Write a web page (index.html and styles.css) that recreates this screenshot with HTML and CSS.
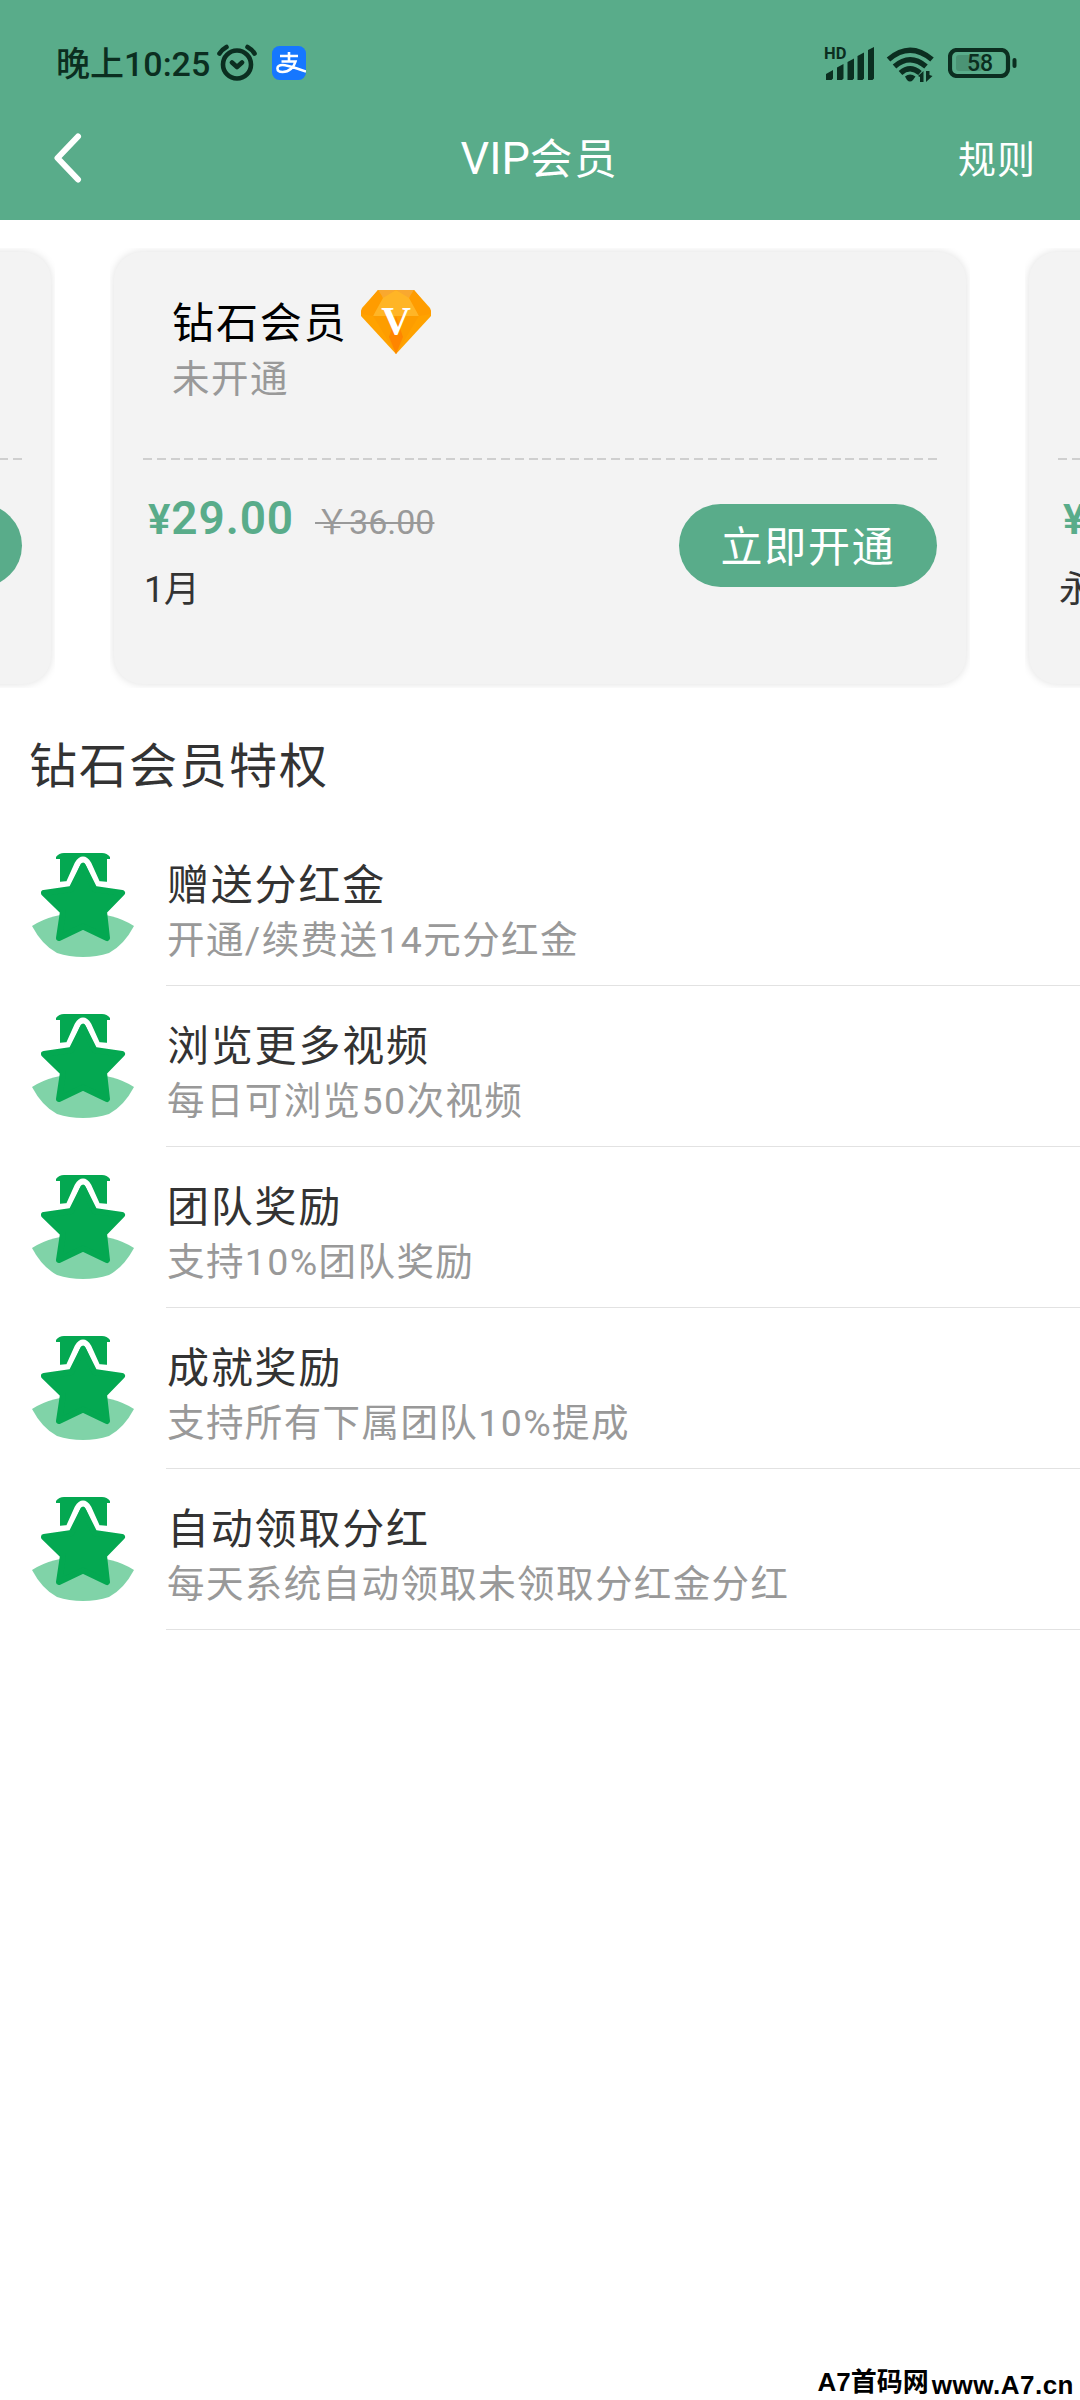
FILE: index.html
```html
<!DOCTYPE html>
<html lang="zh-CN">
<head>
<meta charset="utf-8">
<title>VIP会员</title>
<link rel="stylesheet" href="styles.css">
</head>
<body>
<svg class="defs" width="0" height="0">
  <symbol id="medal" viewBox="0 0 102 104">
    <path fill="#80d3a8" d="M0 73Q20 60 51 60Q82 60 102 73Q92 92 77 100Q65 104 51 104Q37 104 25 100Q10 92 0 73Z"/>
    <path fill="#04a851" d="M32 0H70Q75 0 78 4V6H75V29H28V6H24V4Q27 0 32 0Z"/>
    <path fill="none" stroke="#fff" stroke-width="6" stroke-linejoin="round" d="M26 32L36.500 31L45.500 11Q51 2 56.500 11L65.500 31L77 32"/>
    <path fill="#04a851" stroke="#04a851" stroke-width="6" stroke-linejoin="round" d="M51 13L39.500 36L12 40L31 58.500L27 85L51 73.500L75 85L72 58.500L90 40L62.500 36Z"/>
  </symbol>
</svg>
<div class="page">
  <header class="header">
    <div class="status">
      <span class="time">晚上10:25</span>
      <svg class="alarm" viewBox="0 0 42 38" fill="none" stroke="#0b2e20" stroke-width="4.600" stroke-linecap="round" stroke-linejoin="round">
        <circle cx="20" cy="20.500" r="14"/><path d="M15 18.500L20 23L25 18.500M2.500 9.500Q5 5.500 9.500 3M30.500 3Q35 5.500 37.500 9.500"/>
      </svg>
      <svg class="alipay" viewBox="0 0 34 34">
        <rect width="34" height="34" rx="7.500" fill="#1677ff"/>
        <path fill="none" stroke="#fff" stroke-width="2.600" d="M8 10H26M17 6V15.500M9.500 15.500H23.500C22 21 17.500 26 10.500 26C4 26 3.500 19 10.500 19C17 19 25 23 34 25.500"/>
      </svg>
      <span class="spacer"></span>
      <svg class="signal" viewBox="0 0 50 36" fill="#0b2e20">
        <text class="hd" x="0" y="14">HD</text>
        <path d="M2 35V29L9 25V33.500L7.500 35ZM13 35V22.500L19.500 19V33.500L18 35ZM23.500 35V17L30 13.500V33.500L28.500 35ZM33.500 35V11L40 7.500V33.500L38.500 35ZM44 35V5L50 2V33.500L48.500 35Z"/>
      </svg>
      <svg class="wifi" viewBox="0 0 48 36" fill="none" stroke="#0b2e20" stroke-width="5.400">
        <path d="M1.500 13.500Q23 -5 45 13.500M7.500 20.500Q23 7 39 20.500M13.500 27Q23 18.500 33 27"/>
        <path fill="#0b2e20" stroke="none" d="M18 30.500Q23 26.500 28.500 30.500L26 34Q23 37 20 34ZM31 30L36.500 25V36H33V31ZM39 25H42.500V29L45.500 30L39 36Z"/>
      </svg>
      <svg class="battery" viewBox="0 0 69 30">
        <rect x="8" y="7" width="26" height="16" rx="3" fill="#4b9475"/>
        <rect x="2" y="2" width="58" height="26" rx="7" fill="none" stroke="#0b2e20" stroke-width="4.200"/>
        <rect x="64.500" y="10" width="4" height="10" rx="2" fill="#0b2e20"/>
        <text class="pct" x="19" y="23" textLength="26">58</text>
      </svg>
    </div>
    <nav class="nav">
      <svg class="back" viewBox="0 0 28 50" fill="none" stroke="#fff" stroke-width="6" stroke-linecap="round" stroke-linejoin="round"><path d="M24 3.500L3.500 25L24 46.500"/></svg>
      <h1 class="title"><span class="vip">VIP</span>会员</h1>
      <span class="rules">规则</span>
    </nav>
  </header>

  <section class="carousel">
    <div class="slide"><div class="card">
      <div class="level"></div>
      <div class="offer"><div></div><button class="buy">立即开通</button></div>
    </div></div>
    <div class="slide"><div class="card">
      <div class="level">
        <div class="name">钻石会员
          <svg class="gem" viewBox="0 0 70 64" preserveAspectRatio="none">
            <path fill="#ffa200" d="M17 0H53L69 18Q70 20 70 22V26L35 64L0 26V22Q0 20 1 18Z"/>
            <path fill="#ffb526" d="M20 7L35 0L50 7L58 26H12Z"/>
            <path fill="#f9a82f" d="M17 0H53L48 8L35 0L22 8Z"/>
            <path fill="#ff9c00" d="M17 0L22 8L12 26L0 24V21ZM53 0L48 8L58 26L70 24V21Z"/>
            <path fill="#fa9600" d="M12 26H58L35 64Z" opacity=".45"/>
            <path fill="#ff8500" d="M35 26L28 47L35 64L42 47Z"/>
            <text class="gem-v" x="35" y="43.500" text-anchor="middle">V</text>
          </svg>
        </div>
        <div class="state">未开通</div>
      </div>
      <div class="offer">
        <div class="prices">
          <div class="price-row"><b class="price"><span class="yen">¥</span>29.00</b><s class="old">￥36.00</s></div>
          <div class="term">1月</div>
        </div>
        <button class="buy">立即开通</button>
      </div>
    </div></div>
    <div class="slide"><div class="card">
      <div class="level"></div>
      <div class="offer">
        <div class="prices">
          <div class="price-row"><b class="price"><span class="yen">¥</span></b></div>
          <div class="term">永久</div>
        </div>
      </div>
    </div></div>
  </section>

  <h2 class="heading">钻石会员特权</h2>
  <ul class="perks">
    <li class="perk"><svg class="medal"><use href="#medal"/></svg><div class="body"><div class="perk-name">赠送分红金</div><div class="perk-desc">开通/续费送14元分红金</div></div></li>
    <li class="perk"><svg class="medal"><use href="#medal"/></svg><div class="body"><div class="perk-name">浏览更多视频</div><div class="perk-desc">每日可浏览50次视频</div></div></li>
    <li class="perk"><svg class="medal"><use href="#medal"/></svg><div class="body"><div class="perk-name">团队奖励</div><div class="perk-desc">支持10%团队奖励</div></div></li>
    <li class="perk"><svg class="medal"><use href="#medal"/></svg><div class="body"><div class="perk-name">成就奖励</div><div class="perk-desc">支持所有下属团队10%提成</div></div></li>
    <li class="perk"><svg class="medal"><use href="#medal"/></svg><div class="body"><div class="perk-name">自动领取分红</div><div class="perk-desc">每天系统自动领取未领取分红金分红</div></div></li>
  </ul>
  <div class="watermark"><span>A7</span><span class="wm-cn">首码网</span><span class="wm-url">www.A7.cn</span></div>
</div>
</body>
</html>
```
FILE: styles.css
```css
* { box-sizing: border-box; margin: 0; padding: 0; }
body { background: #fff; color: #333; font-family: Roboto, "Noto Sans CJK SC", sans-serif; }
svg { display: block; flex: none; }
.defs { position: absolute; }
.page { position: relative; width: 1080px; height: 2400px; overflow: hidden; white-space: nowrap; }

.header { height: 220px; background: #59ac8a; display: flex; flex-direction: column; }
.status { height: 98px; padding: 30px 63px 0 56px; display: flex; align-items: center; color: #0b2e20; }
.time { font-size: 34px; font-weight: 500; line-height: 68px; width: 161px; letter-spacing: 0; }
.alarm { width: 42px; height: 38px; margin-top: -3px; }
.alipay { width: 34px; height: 34px; margin: -2px 0 0 13px; }
.spacer { flex: 1; }
.signal { width: 50px; height: 36px; overflow: visible; margin-top: -2px; }
.hd { font: 700 16.500px Roboto, sans-serif; }
.wifi { width: 48px; height: 36px; margin: -1px 0 0 13px; overflow: visible; }
.battery { width: 69px; height: 30px; margin: -2px 0 0 13px; }
.pct { font: 500 23px Roboto, sans-serif; fill: #0b2e20; }
.nav { height: 122px; display: grid; grid-template-columns: 1fr auto 1fr; align-items: center; padding: 1px 44px 0 54px; color: #fff; }
.back { width: 28px; height: 50px; margin-bottom: 4px; }
.title { font-size: 42.500px; font-weight: 400; line-height: 60px; letter-spacing: 1.800px; margin-right: 11px; }
.vip { font-size: 45px; letter-spacing: 0; }
.rules { font-size: 38px; line-height: 60px; letter-spacing: 1px; justify-self: end; }

.carousel { margin-top: 28px; height: 440px; display: flex; justify-content: center; gap: 55px; }
.slide { flex: none; width: 860px; padding: 4px; overflow: hidden; }
.card { height: 432px; border-radius: 28px; background: #f3f3f3; box-shadow: 0 0 9px rgba(0, 0, 0, .13); padding: 0 29px; }
.level { height: 208px; padding: 44px 0 0 29px; background: repeating-linear-gradient(90deg, #cfcfcf 0 9px, transparent 9px 13.770px) 0 100% / 100% 2px no-repeat; }
.name { display: flex; align-items: center; gap: 13px; font-size: 42px; line-height: 56px; letter-spacing: 1.900px; color: #000; }
.gem { width: 70px; height: 64px; margin: -6px 0 -2px; }
.gem-v { font: 700 41px "Liberation Serif", serif; letter-spacing: 0; fill: #fff; }
.state { font-size: 37.500px; line-height: 48px; margin-top: 3px; letter-spacing: 1.500px; color: #999; }
.offer { display: flex; justify-content: space-between; padding-top: 28px; }
.prices { padding-left: 1px; }
.price-row { display: flex; align-items: baseline; height: 60px; line-height: 60px; }
.price { font-size: 46px; font-weight: 600; color: #59ac8a; padding-left: 4px; letter-spacing: .9px; }
.yen { font-size: 42px; }
.old { font-size: 34px; color: #999; margin-left: 21px; text-decoration-thickness: 1.500px; }
.term { font-size: 36px; line-height: 50px; margin-top: 17px; letter-spacing: -.5px; }
.buy { width: 258px; height: 83px; margin-top: 16px; border: 0; border-radius: 42px; background: #59ac8a; color: #fff; font: 400 42px/80px "Noto Sans CJK SC", sans-serif; letter-spacing: 1.800px; padding-bottom: 3px; }

.heading { font-size: 48px; font-weight: 400; line-height: 70px; margin: 44px 0 0 29px; letter-spacing: 2px; }
.perks { list-style: none; margin-top: 23px; }
.perk { height: 161px; padding-left: 32px; display: flex; }
.medal { width: 102px; height: 104px; margin: 28px 32px 0 0; }
.body { flex: 1; border-bottom: 1px solid #e2e2e2; padding: 33px 0 0 1px; }
.perk-name { font-size: 42px; line-height: 56px; letter-spacing: 1.800px; }
.perk-desc { font-size: 37.500px; line-height: 52px; letter-spacing: 1.400px; color: #999; }
.watermark { position: absolute; right: 6px; bottom: -5px; display: flex; color: #000; font: 700 26px/40px "Liberation Sans", "Noto Sans CJK SC", sans-serif; }
.wm-url { padding-top: 3px; margin-left: 3px; letter-spacing: .5px; }
```
